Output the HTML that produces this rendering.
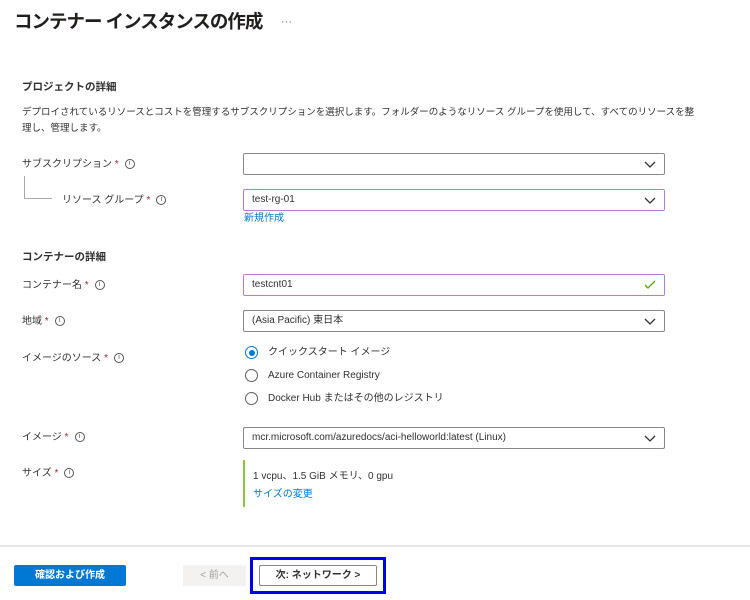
<!DOCTYPE html>
<html><head><meta charset="utf-8"><style>
*{margin:0;padding:0;box-sizing:border-box}
body{width:750px;height:600px;background:#fff;position:relative;overflow:hidden;font-family:"Liberation Sans","Noto Sans CJK JP",sans-serif;color:#323130;font-size:10px}
.a{position:absolute;white-space:nowrap;line-height:14px}
.lbl{font-size:10px;color:#323130}
.req{color:#a4262c}
.info{display:inline-block;width:10px;height:10px;border:1px solid #555;border-radius:50%;font-size:7px;line-height:8px;text-align:center;margin-left:6px;vertical-align:middle;color:#555}
.inp{position:absolute;left:243px;width:422px;height:22px;border:1px solid #8a8886;border-radius:2px;font-size:10px;line-height:20px;padding-left:8px;white-space:nowrap}
.chev{position:absolute;right:8px;top:5px}
.rad{position:absolute;left:245px;width:13px;height:13px;border:1px solid #605e5c;border-radius:50%}
.link{color:#0078d4}
</style></head><body>
<div class="a" style="left:14px;top:10px;font-size:18.5px;letter-spacing:-1px;line-height:24px;font-weight:bold;color:#201f1e">コンテナー インスタンスの作成</div>
<div class="a" style="left:281px;top:15px;font-size:11px;color:#666">···</div>
<div class="a" style="left:22px;top:80px;font-size:10.5px;font-weight:bold">プロジェクトの詳細</div>
<div class="a" style="left:22px;top:105px;font-size:9.5px;line-height:16px">デプロイされているリソースとコストを管理するサブスクリプションを選択します。フォルダーのようなリソース グループを使用して、すべてのリソースを整<br>理し、管理します。</div>
<div class="a lbl" style="left:22px;top:158px">サブスクリプション <span class="req">*</span><span class="info">i</span></div>
<div class="inp" style="top:153px"><svg class="chev" width="12" height="10"><path d="M1 3l5 5 5-5" fill="none" stroke="#333" stroke-width="1.3"/></svg></div>
<div class="a" style="left:24px;top:176px;width:28px;height:23px;border-left:1px solid #aaa;border-bottom:1px solid #aaa"></div>
<div class="a lbl" style="left:62px;top:194px">リソース グループ <span class="req">*</span><span class="info">i</span></div>
<div class="inp" style="top:189px;border-color:#b47fd0">test-rg-01<svg class="chev" width="12" height="10"><path d="M1 3l5 5 5-5" fill="none" stroke="#333" stroke-width="1.3"/></svg></div>
<div class="a link" style="left:244px;top:212px">新規作成</div>
<div class="a" style="left:22px;top:250px;font-size:10.5px;font-weight:bold">コンテナーの詳細</div>
<div class="a lbl" style="left:22px;top:279px">コンテナー名 <span class="req">*</span><span class="info">i</span></div>
<div class="inp" style="top:274px;border-color:#b47fd0">testcnt01<svg class="chev" width="12" height="10"><path d="M1 5l3 3 7-7" fill="none" stroke="#57a300" stroke-width="1.3"/></svg></div>
<div class="a lbl" style="left:22px;top:315px">地域 <span class="req">*</span><span class="info">i</span></div>
<div class="inp" style="top:310px">(Asia Pacific) 東日本<svg class="chev" width="12" height="10"><path d="M1 3l5 5 5-5" fill="none" stroke="#333" stroke-width="1.3"/></svg></div>
<div class="a lbl" style="left:22px;top:352px">イメージのソース <span class="req">*</span><span class="info">i</span></div>
<div class="rad" style="top:346px;border-color:#0078d4"><div style="margin:2.5px;width:6px;height:6px;border-radius:50%;background:#0078d4"></div></div>
<div class="a" style="left:268px;top:346px">クイックスタート イメージ</div>
<div class="rad" style="top:369px"></div>
<div class="a" style="left:268px;top:369px">Azure Container Registry</div>
<div class="rad" style="top:392px"></div>
<div class="a" style="left:268px;top:392px">Docker Hub またはその他のレジストリ</div>
<div class="a lbl" style="left:22px;top:431px">イメージ <span class="req">*</span><span class="info">i</span></div>
<div class="inp" style="top:427px">mcr.microsoft.com/azuredocs/aci-helloworld:latest (Linux)<svg class="chev" width="12" height="10"><path d="M1 3l5 5 5-5" fill="none" stroke="#333" stroke-width="1.3"/></svg></div>
<div class="a lbl" style="left:22px;top:467px">サイズ <span class="req">*</span><span class="info">i</span></div>
<div class="a" style="left:243px;top:460px;width:2px;height:47px;background:#8cc63f"></div>
<div class="a" style="left:253px;top:470px">1 vcpu、1.5 GiB メモリ、0 gpu</div>
<div class="a link" style="left:253px;top:488px">サイズの変更</div>
<div class="a" style="left:0;top:545px;width:750px;height:2px;background:#e6e6e6"></div>
<div class="a" style="left:14px;top:565px;width:112px;height:21px;background:#0078d4;border-radius:2px;color:#fff;font-weight:bold;text-align:center;line-height:21px">確認および作成</div>
<div class="a" style="left:183px;top:565px;width:63px;height:21px;background:#f3f2f1;color:#a19f9d;text-align:center;line-height:21px">&lt; 前へ</div>
<div class="a" style="left:250px;top:557px;width:136px;height:37px;border:3px solid #0000e6"></div>
<div class="a" style="left:259px;top:565px;width:118px;height:21px;border:1px solid #8a8886;border-radius:2px;text-align:center;line-height:19px;font-weight:bold;color:#323130">次: ネットワーク &gt;</div>
</body></html>
